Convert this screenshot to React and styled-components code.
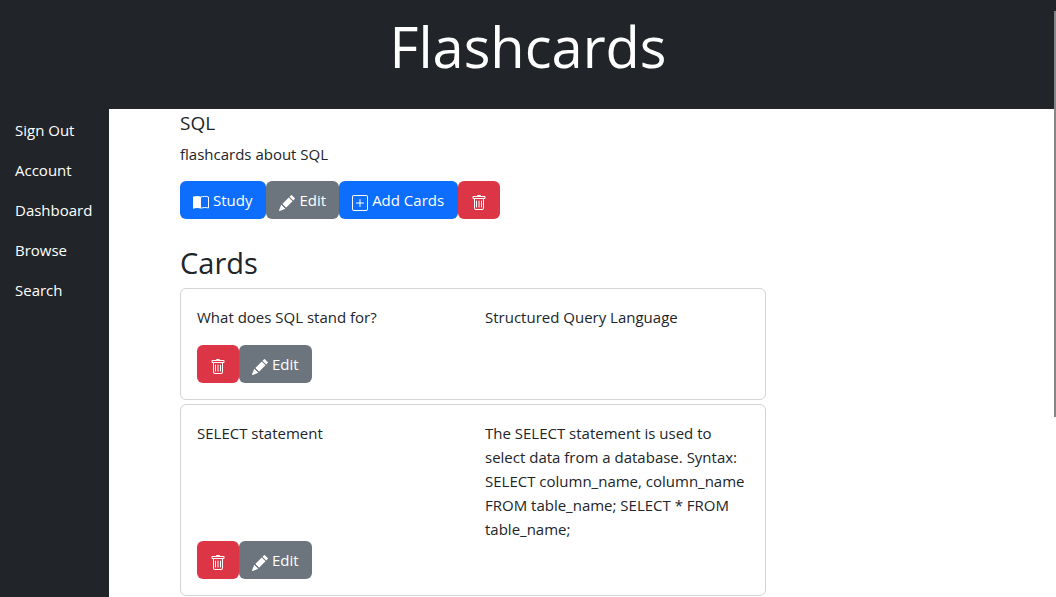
import React from "react";
import styled, { createGlobalStyle } from "styled-components";
import { BsPencilFill, BsPlusSquare, BsTrash } from "react-icons/bs";

const GlobalStyle = createGlobalStyle`
  *, *::before, *::after { box-sizing: border-box; }
  body {
    margin: 0;
    color: #212529;
    background: #fff;
    font: 15px/24px "Segoe UI", "Open Sans", "Noto Sans", sans-serif;
  }
  h1, h2, h3, p { margin: 0; font-weight: 400; }
`;

const Page = styled.div`
  display: flex;
  flex-direction: column;
  min-height: 100vh;
`;

const Header = styled.header`
  padding: 10px 0 27px;
  background: #212529;
  color: #fff;
  text-align: center;
`;

const SiteTitle = styled.h1`
  font-size: 56px;
  line-height: 72px;
`;

const Body = styled.div`
  display: flex;
  flex: 1;
`;

const Sidebar = styled.nav`
  flex: none;
  width: 109px;
  background: #212529;
`;

const NavList = styled.ul`
  margin: 0;
  padding: 1px 0 0;
  list-style: none;
`;

const NavLink = styled.a`
  display: block;
  padding: 8px 15px;
  color: #fff;
  text-decoration: none;
`;

const Main = styled.main`
  flex: 1;
  padding: 2px 71px 1px;
`;

const Content = styled.div`
  max-width: 586px;
`;

const DeckTitle = styled.h2`
  margin-bottom: 7px;
  font-size: 19px;
  line-height: 24px;
`;

const Actions = styled.div`
  display: flex;
`;

const DeckActions = styled(Actions)`
  margin: 15px 0 24px;
`;

const CardsTitle = styled.h2`
  margin-bottom: 6px;
  font-size: 29px;
  line-height: 39px;
`;

const fills = { primary: "#0d6efd", secondary: "#6c757d", danger: "#dc3545" };

const Button = styled.button`
  display: flex;
  align-items: center;
  gap: 4px;
  height: 38px;
  padding: 0 ${({ $variant }) => ($variant === "primary" ? "14px" : "13px")} 0 13px;
  border: 0;
  border-radius: 6px;
  background: ${({ $variant }) => fills[$variant]};
  color: #fff;
  font: inherit;
  white-space: nowrap;
  cursor: pointer;

  svg {
    flex: none;
    width: 16px;
    height: 16px;
    margin-top: 6px;
  }
`;

const CardList = styled.div`
  display: flex;
  flex-direction: column;
  gap: 4px;
`;

const Card = styled.article`
  padding: 16px;
  border: 1px solid #d3d4d5;
  border-radius: 6px;
`;

const Sides = styled.div`
  display: grid;
  grid-template-columns: 1fr 1fr;
  gap: 24px;
`;

const Front = styled.p`
  padding-bottom: 16px;
`;

const ScrollThumb = styled.div`
  position: fixed;
  top: 11px;
  right: 0;
  width: 2px;
  height: 68vh;
  background: #858585;
`;

const StudyIcon = () => (
  <svg viewBox="0 0 16 16" fill="none" aria-hidden="true">
    <path d="M0 1.800C2.500 0.700 5.800 0.700 8 1.800V13.500C5.500 12.700 2.500 12.700 0 13.700Z" fill="currentColor" />
    <path d="M8 2C10 1.200 13 1.200 15.500 2V13C13 12.300 10.500 12.300 8 13.200" stroke="currentColor" />
  </svg>
);

const EditButton = () => (
  <Button type="button" $variant="secondary">
    <BsPencilFill aria-hidden="true" />
    Edit
  </Button>
);

const DeleteButton = ({ label }) => (
  <Button type="button" $variant="danger" aria-label={label}>
    <BsTrash aria-hidden="true" />
  </Button>
);

const links = ["Sign Out", "Account", "Dashboard", "Browse", "Search"];

const cards = [
  { front: "What does SQL stand for?", back: "Structured Query Language" },
  {
    front: "SELECT statement",
    back: "The SELECT statement is used to select data from a database. Syntax: SELECT column_name, column_name FROM table_name; SELECT * FROM table_name;",
  },
];

export default function App() {
  return (
    <Page>
      <GlobalStyle />
      <Header>
        <SiteTitle>Flashcards</SiteTitle>
      </Header>
      <Body>
        <Sidebar>
          <NavList>
            {links.map((name) => (
              <li key={name}>
                <NavLink href="#">{name}</NavLink>
              </li>
            ))}
          </NavList>
        </Sidebar>
        <Main>
          <Content>
            <DeckTitle>SQL</DeckTitle>
            <p>flashcards about SQL</p>
            <DeckActions>
              <Button type="button" $variant="primary">
                <StudyIcon />
                Study
              </Button>
              <EditButton />
              <Button type="button" $variant="primary">
                <BsPlusSquare aria-hidden="true" />
                Add Cards
              </Button>
              <DeleteButton label="Delete deck" />
            </DeckActions>
            <CardsTitle>Cards</CardsTitle>
            <CardList>
              {cards.map((card) => (
                <Card key={card.front}>
                  <Sides>
                    <Front>{card.front}</Front>
                    <p>{card.back}</p>
                  </Sides>
                  <Actions>
                    <DeleteButton label="Delete card" />
                    <EditButton />
                  </Actions>
                </Card>
              ))}
            </CardList>
          </Content>
        </Main>
      </Body>
      <ScrollThumb />
    </Page>
  );
}
